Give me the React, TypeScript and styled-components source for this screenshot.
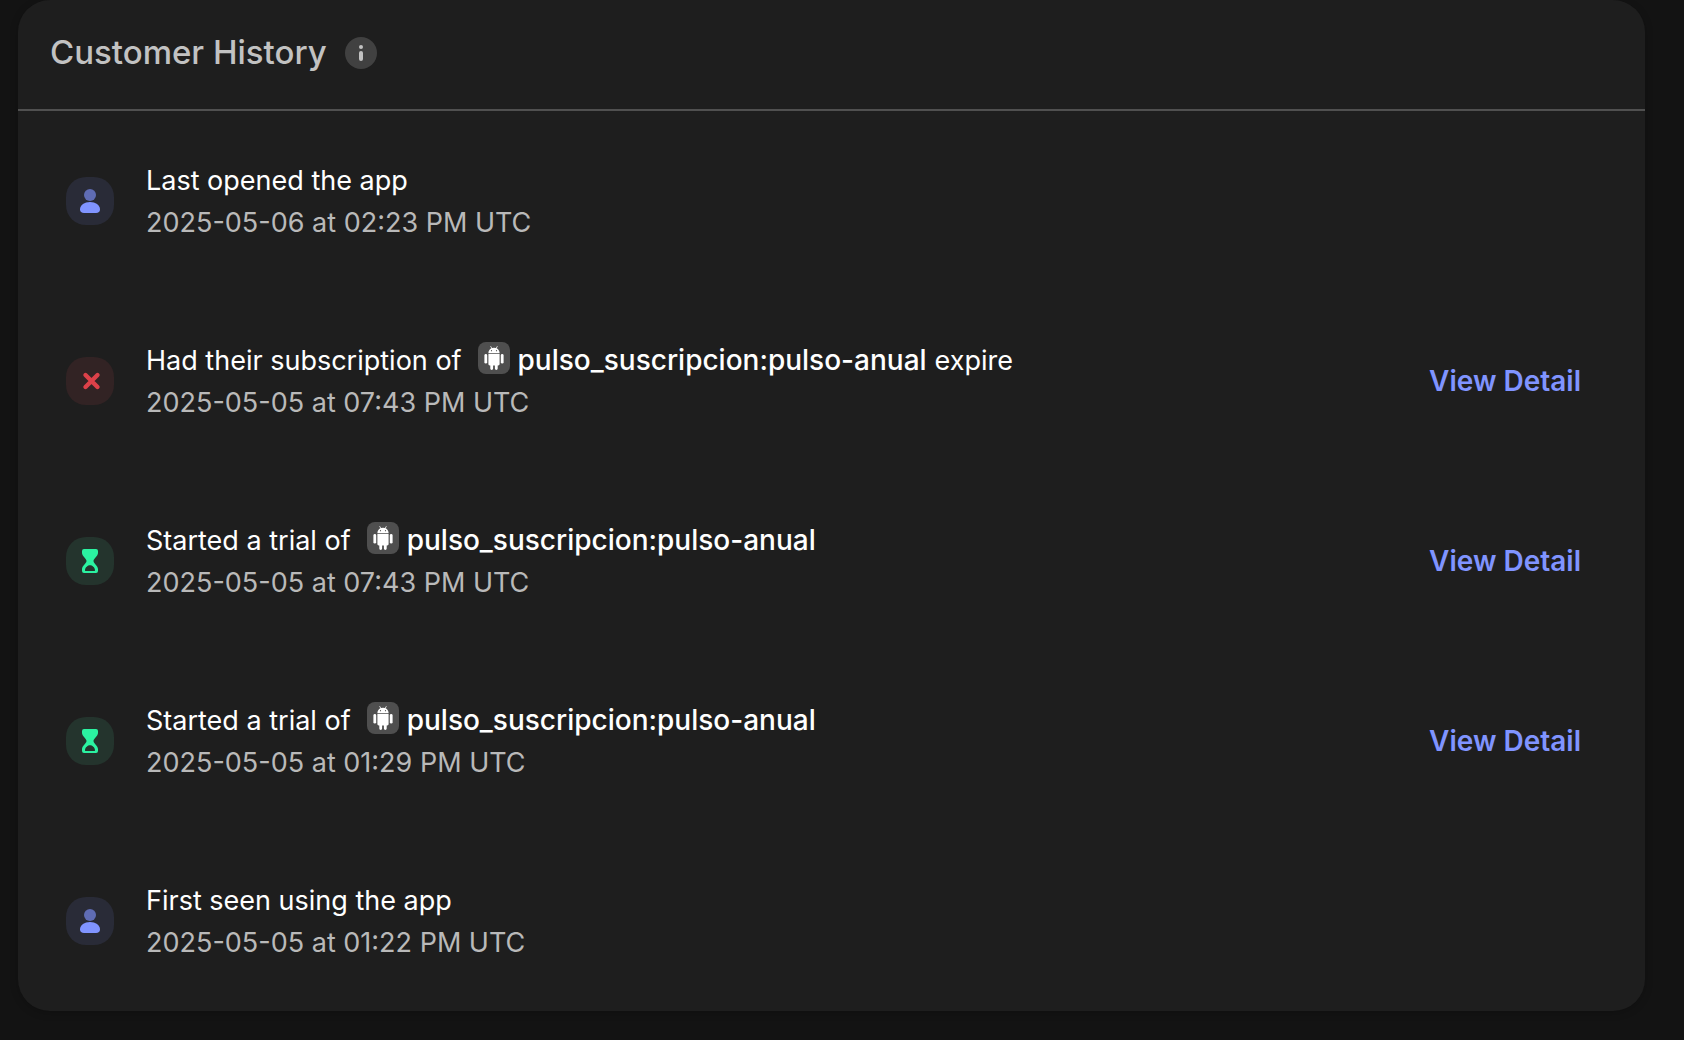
import React from "react";
import styled, { createGlobalStyle } from "styled-components";

const GlobalStyle = createGlobalStyle`
  * { box-sizing: border-box; }
  body {
    margin: 0;
    background: #131313;
    color: #ffffff;
    font-family: Inter, "Liberation Sans", sans-serif;
    font-size: 27px;
    line-height: 42px;
  }
`;

const Page = styled.main`
  min-height: 100vh;
  padding: 0 39px 29px 18px;
`;

const Card = styled.section`
  background: #1e1e1e;
  border-radius: 32px;
  box-shadow: 0 2px 8px rgba(0, 0, 0, 0.2);
`;

const CardHeader = styled.header`
  display: flex;
  align-items: center;
  gap: 18px;
  height: 111px;
  padding: 0 32px 4px;
  border-bottom: 2px solid #505050;
`;

const Title = styled.h2`
  margin: 0;
  padding-bottom: 2px;
  color: #c2c2c2;
  font-size: 33px;
  font-weight: 500;
  line-height: 48px;
`;

const InfoButton = styled.button`
  display: flex;
  width: 32px;
  height: 32px;
  padding: 0;
  border: 0;
  border-radius: 50%;
  background: #414141;
  color: #c2c2c2;
`;

const EventList = styled.ul`
  margin: 0;
  padding: 0;
  list-style: none;
`;

const EventRow = styled.li`
  display: flex;
  align-items: center;
  gap: 32px;
  min-height: 180px;
  padding: 40px 64px 40px 48px;
`;

type Tone = "user" | "expired" | "trial";

const toneFill: Record<Tone, string> = {
  user: "#292b37",
  expired: "#322324",
  trial: "#24342d",
};

const EventBadge = styled.span<{ $tone: Tone }>`
  display: flex;
  flex: none;
  width: 48px;
  height: 48px;
  border-radius: 20px;
  background: ${({ $tone }) => toneFill[$tone]};
`;

const EventBody = styled.div`
  flex: 1;
  min-width: 0;
  padding-top: 2px;
`;

const EventText = styled.p`
  display: flex;
  flex-wrap: wrap;
  align-items: center;
  column-gap: 8px;
  margin: 0;
`;

const EventTime = styled.time`
  display: block;
  color: #b9b9b9;
`;

const Product = styled.strong`
  display: inline-flex;
  align-items: center;
  gap: 8px;
  padding: 0 0 2px 8px;
  font-size: 28px;
  font-weight: 500;
  line-height: 40px;
`;

const StoreChip = styled.span`
  display: flex;
  width: 32px;
  height: 32px;
  margin-bottom: 4px;
  border-radius: 8px;
  background: #4f4f4f;
`;

const DetailLink = styled.a`
  flex: none;
  color: #8094ff;
  font-size: 28px;
  font-weight: 600;
  text-decoration: none;
`;

const InfoIcon = () => (
  <svg width="32" height="32" viewBox="0 0 32 32" fill="currentColor" aria-hidden="true">
    <circle cx="16" cy="10" r="2" />
    <rect x="14" y="14" width="4" height="10" rx="2" />
  </svg>
);

const AndroidIcon = () => (
  <svg width="32" height="32" viewBox="0 0 32 32" aria-hidden="true">
    <g fill="#ffffff">
      <path d="M10.400 11c0-2.100 1.200-3.800 3-4.700l-1.100-1.900.6-.3 1.100 2a6.500 6.500 0 0 1 4 0l1.100-2 .6.3-1.100 1.900c1.800.9 3 2.600 3 4.700z" />
      <path d="M10.400 11.800h11.200v10.200c0 .8-.6 1.400-1.400 1.400h-.5v3.200a1.400 1.400 0 0 1-2.800 0v-3.200h-1.800v3.200a1.400 1.400 0 0 1-2.800 0v-3.200h-.5c-.8 0-1.400-.6-1.400-1.400z" />
      <rect x="6.400" y="12" width="2.800" height="9.600" rx="1.400" />
      <rect x="22.800" y="12" width="2.800" height="9.600" rx="1.400" />
    </g>
    <circle cx="13.500" cy="8.700" r=".6" fill="#4f4f4f" />
    <circle cx="18.500" cy="8.700" r=".6" fill="#4f4f4f" />
  </svg>
);

const UserIcon = () => (
  <svg width="48" height="48" viewBox="0 0 48 48" aria-hidden="true">
    <circle cx="24" cy="18" r="6" fill="#5f6cb4" />
    <path d="M24 25c5.500 0 10 3.200 10 7.300 0 2.500-1.500 3.700-4 3.700H18c-2.500 0-4-1.200-4-3.700C14 28.200 18.500 25 24 25z" fill="#8094ff" />
  </svg>
);

const CrossIcon = () => (
  <svg width="48" height="48" viewBox="0 0 48 48" aria-hidden="true">
    <path d="M19.500 18l12 12M31.500 18l-12 12" stroke="#dc4149" strokeWidth="4.400" strokeLinecap="round" />
  </svg>
);

const HourglassIcon = () => (
  <svg width="48" height="48" viewBox="0 0 48 48" aria-hidden="true">
    <path
      fillRule="evenodd"
      fill="#2bf2a1"
      d="M18 12h12a2 2 0 0 1 2 2v2c0 3-4.500 5.600-4.500 8s4.500 5 4.500 8v2a2 2 0 0 1-2 2H18a2 2 0 0 1-2-2v-2c0-3 4.500-5.600 4.500-8S16 19 16 16v-2a2 2 0 0 1 2-2zM24 28.200c-2 0-5 2-5 5 0 .6.300.9.900.9h8.200c.6 0 .9-.3.900-.9 0-3-3-5-5-5z"
    />
  </svg>
);

const toneIcon: Record<Tone, React.ReactElement> = {
  user: <UserIcon />,
  expired: <CrossIcon />,
  trial: <HourglassIcon />,
};

interface HistoryEvent {
  tone: Tone;
  text: string;
  product?: string;
  suffix?: string;
  date: string;
  time: string;
}

const events: HistoryEvent[] = [
  { tone: "user", text: "Last opened the app", date: "2025-05-06", time: "02:23 PM UTC" },
  {
    tone: "expired",
    text: "Had their subscription of",
    product: "pulso_suscripcion:pulso-anual",
    suffix: "expire",
    date: "2025-05-05",
    time: "07:43 PM UTC",
  },
  { tone: "trial", text: "Started a trial of", product: "pulso_suscripcion:pulso-anual", date: "2025-05-05", time: "07:43 PM UTC" },
  { tone: "trial", text: "Started a trial of", product: "pulso_suscripcion:pulso-anual", date: "2025-05-05", time: "01:29 PM UTC" },
  { tone: "user", text: "First seen using the app", date: "2025-05-05", time: "01:22 PM UTC" },
];

export default function App() {
  return (
    <>
      <GlobalStyle />
      <Page>
        <Card>
          <CardHeader>
            <Title>Customer History</Title>
            <InfoButton type="button" aria-label="About customer history">
              <InfoIcon />
            </InfoButton>
          </CardHeader>
          <EventList>
            {events.map((event, index) => (
              <EventRow key={index}>
                <EventBadge $tone={event.tone}>{toneIcon[event.tone]}</EventBadge>
                <EventBody>
                  <EventText>
                    <span>{event.text}</span>
                    {event.product && (
                      <Product>
                        <StoreChip>
                          <AndroidIcon />
                        </StoreChip>
                        {event.product}
                      </Product>
                    )}
                    {event.suffix && <span>{event.suffix}</span>}
                  </EventText>
                  <EventTime dateTime={event.date}>
                    {event.date} at {event.time}
                  </EventTime>
                </EventBody>
                {event.product && <DetailLink href="#detail">View Detail</DetailLink>}
              </EventRow>
            ))}
          </EventList>
        </Card>
      </Page>
    </>
  );
}
